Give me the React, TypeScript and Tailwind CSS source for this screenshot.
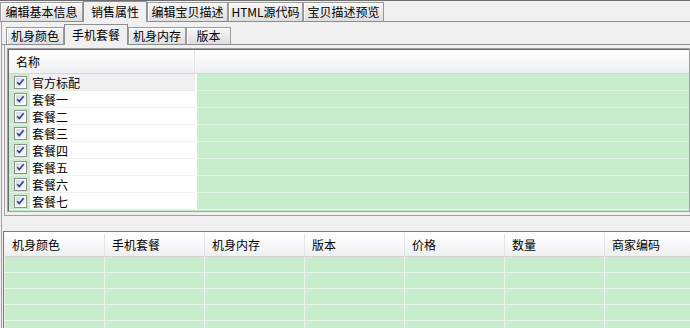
import type { ReactNode } from "react";

const outerTabs = [
  { label: "编辑基本信息", w: "w-[83px]" },
  { label: "销售属性", w: "w-[64px]", active: true },
  { label: "编辑宝贝描述", w: "w-[81px]" },
  { label: "HTML源代码", w: "w-[75px]" },
  { label: "宝贝描述预览", w: "w-[81px]" },
];

const innerTabs = [
  { label: "机身颜色", w: "w-[58px]" },
  { label: "手机套餐", w: "w-[64px]", active: true },
  { label: "机身内存", w: "w-[58px]" },
  { label: "版本", w: "w-[45px]" },
];

const packages = ["官方标配", "套餐一", "套餐二", "套餐三", "套餐四", "套餐五", "套餐六", "套餐七"];
const columns = ["机身颜色", "手机套餐", "机身内存", "版本", "价格", "数量", "商家编码"];

function Tab({ label, w, active, small }: { label: string; w: string; active?: boolean; small?: boolean }) {
  if (active) {
    return (
      <div className={`${w} relative z-10 -mb-px flex h-[21px] shrink-0 items-center justify-center border border-b-0 border-[#8e8f8f] bg-[#f0f0f0]`}>
        {label}
      </div>
    );
  }
  return (
    <div
      className={`${w} flex shrink-0 items-center justify-center border border-b-0 border-[#9a9a9a] bg-gradient-to-b from-[#f6f6f6] to-[#dedede] shadow-[inset_1px_1px_0_#ffffff] ${small ? "h-[17px]" : "h-[19px]"}`}
    >
      {label}
    </div>
  );
}

function CheckBox() {
  return (
    <svg width="13" height="13" viewBox="0 0 13 13">
      <defs>
        <linearGradient id="cbfill" x1="0" y1="0" x2="1" y2="1">
          <stop offset="0" stopColor="#d6d6d6" />
          <stop offset="1" stopColor="#fbfbfb" />
        </linearGradient>
      </defs>
      <rect x="0.5" y="0.5" width="12" height="12" fill="#fff" stroke="#8e8f8f" />
      <rect x="2" y="2" width="9" height="9" fill="url(#cbfill)" />
      <path d="M3.2 6.2 L5.3 8.6 L9.6 3.2" fill="none" stroke="#2a3f9e" strokeWidth="1.6" />
    </svg>
  );
}

function HeaderCell({ children, className }: { children?: ReactNode; className: string }) {
  return <div className={`flex h-full items-center border-r border-[#e2e3e6] ${className}`}>{children}</div>;
}

export default function App() {
  return (
    <div className="h-[328px] w-[690px] overflow-hidden border-t border-[#6f6f6f] bg-[#f0f0f0] font-['Noto_Sans_CJK_SC',sans-serif] text-[12px] leading-none text-black">
      {/* outer tabs */}
      <div className="flex h-[21px] items-end border-b border-[#8c8c8c]">
        {outerTabs.map((t) => (
          <Tab key={t.label} {...t} />
        ))}
      </div>

      <div className="ml-px h-[306px] border-l border-[#a0a0a0]">
        {/* inner tabs */}
        <div className="flex h-[23px] items-end border-b border-[#8c8c8c] pl-[4px]">
          {innerTabs.map((t) => (
            <Tab key={t.label} {...t} small />
          ))}
        </div>

        <div className="ml-[2px] border-b border-l border-[#a0a0a0] pb-[3px] pl-[2px] pt-[3px]">
          <div className="border border-[#a0a0a0]">
            <div className="border-l border-t border-[#6a6a6a]">
              <div className="flex h-[24px] border-b border-[#d5d5d5] bg-gradient-to-b from-white to-[#eff0f3]">
                <HeaderCell className="w-[186px] pl-[7px]">名称</HeaderCell>
                <div className="flex-1" />
              </div>
              {packages.map((p, i) => (
                <div key={p} className="flex h-[17px]">
                  <div className="flex w-[21px] items-center justify-end border-b border-[#e3f4e6] bg-[#c7edcc] pr-[3px]">
                    <CheckBox />
                  </div>
                  <div
                    className={`flex w-[165px] items-center border-b pl-[2px] pt-px ${i === 0 ? "border-[#e8e8e8] bg-[#f0f0f0]" : "border-[#efefef] bg-white"}`}
                  >
                    {p}
                  </div>
                  <div className="w-[2px] bg-white" />
                  <div className="flex-1 border-b border-[#e3f4e6] bg-[#c7edcc]" />
                </div>
              ))}
              <div className="h-px bg-[#c7edcc]" />
            </div>
          </div>
        </div>

        {/* bottom grid */}
        <div className="ml-px mt-[15px] border-l border-t border-[#7a7a7a]">
          <div className="ml-px flex h-[25px] border-b border-[#d5d5d5] bg-gradient-to-b from-white to-[#eff0f3] pt-[2px]">
            {columns.map((c) => (
              <HeaderCell key={c} className="w-[100px] shrink-0 pl-[7px]">
                {c}
              </HeaderCell>
            ))}
          </div>
          {[0, 1, 2, 3, 4].map((r) => (
            <div key={r} className="ml-px flex h-[16px]">
              {columns.map((c) => (
                <div key={c} className="w-[100px] shrink-0 border-b border-r border-[#e6f6e9] bg-[#c7edcc]" />
              ))}
            </div>
          ))}
        </div>
      </div>
    </div>
  );
}
